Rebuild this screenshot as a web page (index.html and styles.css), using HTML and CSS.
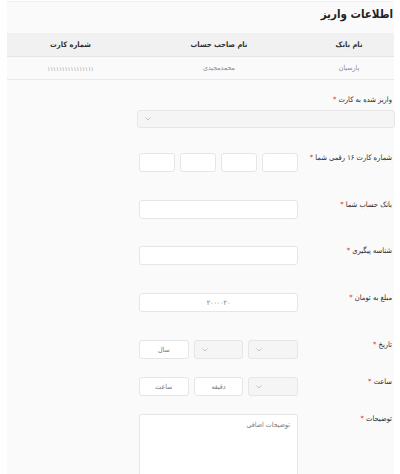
FILE: index.html
```html
<!DOCTYPE html>
<html lang="fa" dir="rtl">
<head>
<meta charset="utf-8">
<link rel="stylesheet" href="styles.css">
</head>
<body>
<div class="panel">
  <h2 class="title">اطلاعات واریز</h2>
  <table class="info">
    <thead>
      <tr><th class="c1">نام بانک</th><th class="c2">نام صاحب حساب</th><th class="c3">شماره کارت</th></tr>
    </thead>
    <tbody>
      <tr><td>پارسیان</td><td>محمدمجیدی</td><td class="card">۱۱۱۱۱۱۱۱۱۱۱۱۱۱۱۱</td></tr>
    </tbody>
  </table>
  <form class="form">
    <div class="stacked">
      <label class="lbl">واریز شده به کارت <span class="req">*</span></label>
      <div class="box select wide"><svg class="chev" viewBox="0 0 6 4"><polyline points="0.5,0.5 3,3 5.5,0.5"/></svg></div>
    </div>
    <div class="field first">
      <label class="lbl">شماره کارت ۱۶ رقمی شما <span class="req">*</span></label>
      <div class="controls quad">
        <div class="box"></div><div class="box"></div><div class="box"></div><div class="box"></div>
      </div>
    </div>
    <div class="field">
      <label class="lbl">بانک حساب شما <span class="req">*</span></label>
      <div class="controls"><div class="box full"></div></div>
    </div>
    <div class="field g27">
      <label class="lbl">شناسه پیگیری <span class="req">*</span></label>
      <div class="controls"><div class="box full"></div></div>
    </div>
    <div class="field">
      <label class="lbl">مبلغ به تومان <span class="req">*</span></label>
      <div class="controls"><div class="box full value">۲۰۰۰۰۲۰</div></div>
    </div>
    <div class="field">
      <label class="lbl">تاریخ <span class="req">*</span></label>
      <div class="controls tri">
        <div class="box select"><svg class="chev" viewBox="0 0 6 4"><polyline points="0.5,0.5 3,3 5.5,0.5"/></svg></div>
        <div class="box select"><svg class="chev" viewBox="0 0 6 4"><polyline points="0.5,0.5 3,3 5.5,0.5"/></svg></div>
        <div class="box value">سال</div>
      </div>
    </div>
    <div class="field tight">
      <label class="lbl">ساعت <span class="req">*</span></label>
      <div class="controls tri">
        <div class="box select"><svg class="chev" viewBox="0 0 6 4"><polyline points="0.5,0.5 3,3 5.5,0.5"/></svg></div>
        <div class="box value">دقیقه</div>
        <div class="box value">ساعت</div>
      </div>
    </div>
    <div class="field tight">
      <label class="lbl">توضیحات <span class="req">*</span></label>
      <div class="controls"><div class="box full area">توضیحات اضافی</div></div>
    </div>
  </form>
</div>
</body>
</html>
```
FILE: styles.css
```css
html, body {
  margin: 0;
  padding: 0;
  background: #ffffff;
}
body {
  font-family: "DejaVu Sans Condensed", "DejaVu Sans", sans-serif;
  color: #333;
  direction: rtl;
}
.panel {
  margin: 1px 6px 0 7px;
  background: #fafafa;
  border-top: 1px solid #f0f0f0;
  min-height: 480px;
}
.title {
  margin: 0;
  height: 26px;
  padding: 5px 1px 0 0;
  line-height: 14px;
  font-size: 11.5px;
  font-weight: bold;
  color: #222;
}
.info {
  width: 100%;
  border-collapse: collapse;
  table-layout: fixed;
}
.info th {
  background: #f1f1f1;
  height: 23px;
  padding: 0;
  font-size: 7.5px;
  font-weight: bold;
  color: #333;
  text-align: center;
  border-bottom: 1px solid #e5e5e5;
}
.info .c1 { width: 90px; }
.info .c2 { width: 170px; }
.info td {
  height: 22px;
  padding: 0;
  font-size: 7px;
  color: #8a8a8a;
  text-align: center;
  border-bottom: 1px solid #e8e8e8;
}
.info td.card {
  font-size: 6px;
  letter-spacing: 0.3px;
  color: #999;
}
.form {
  padding: 15px 0 0 130px;
}
.lbl {
  display: block;
  font-size: 7.5px;
  line-height: 10px;
  color: #2a2a2a;
  padding-right: 2px;
  white-space: nowrap;
}
.req {
  color: #e53935;
}
.stacked .lbl {
  margin-bottom: 5px;
}
.box {
  box-sizing: border-box;
  height: 19px;
  background: #fff;
  border: 1px solid #e6e6e6;
  border-radius: 3px;
}
.select {
  background: #f5f5f5;
  display: flex;
  align-items: center;
  justify-content: flex-end;
  padding-left: 7px;
}
.select.wide {
  height: 18px;
  margin-right: -1px;
}
.chev {
  width: 6px;
  height: 4px;
  fill: none;
  stroke: #bbb;
  stroke-width: 0.8;
}
.field {
  display: flex;
  margin-top: 28px;
}
.field.first {
  margin-top: 25px;
}
.field.g27 {
  margin-top: 27px;
}
.field.tight {
  margin-top: 18px;
}
.field .lbl {
  width: 96px;
  flex: none;
  padding-top: 0;
  box-sizing: border-box;
}
.controls {
  width: 159px;
}
.quad {
  display: grid;
  grid-template-columns: repeat(4, 36px);
  column-gap: 5px;
}
.tri {
  display: grid;
  grid-template-columns: repeat(3, 1fr);
  column-gap: 5px;
}
.full {
  width: 100%;
}
.value {
  display: flex;
  align-items: center;
  justify-content: center;
  font-size: 7px;
  color: #777;
}
.area {
  height: 70px;
  display: block;
  padding: 6px 7px 0 0;
  font-size: 7px;
  color: #777;
}
```
